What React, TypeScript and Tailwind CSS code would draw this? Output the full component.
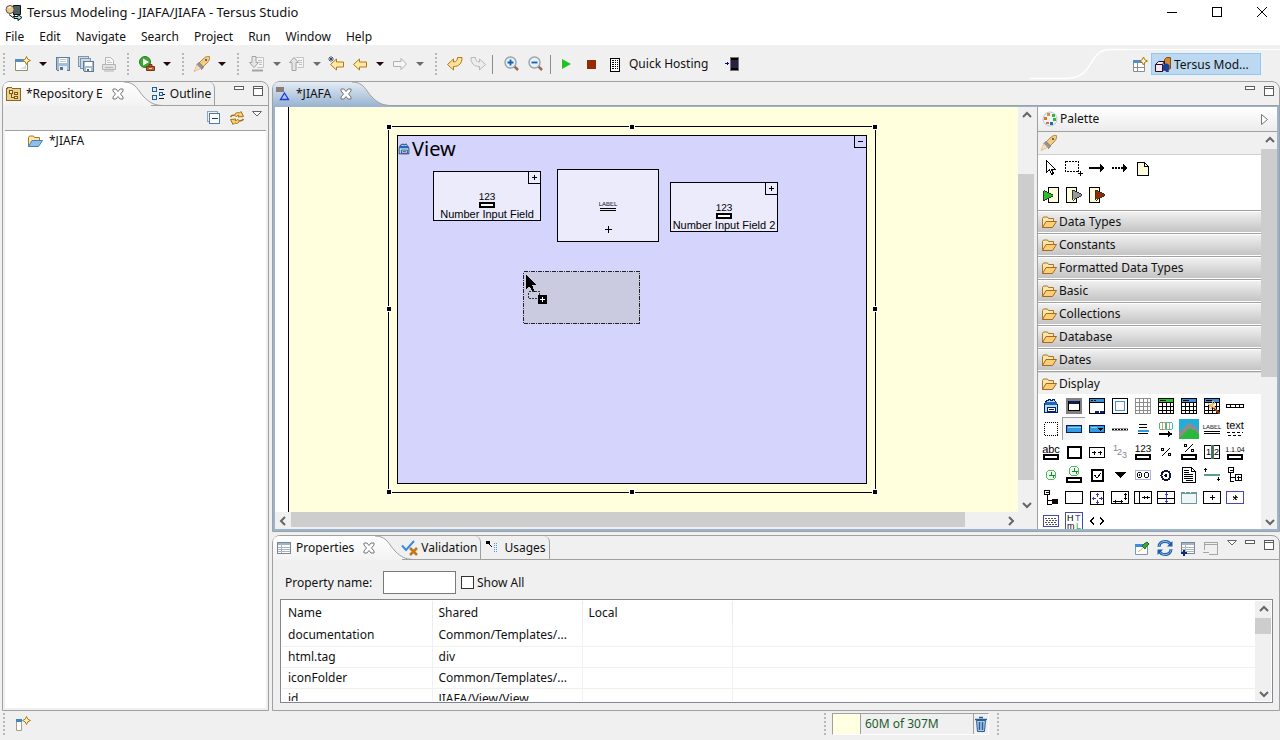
import { useState, type ReactNode } from 'react';
import clsx from 'clsx';

interface IconProps {
  children: ReactNode;
  w?: number;
  h?: number;
  smooth?: boolean;
}

function Icon({ children, w = 16, h = 16, smooth }: IconProps) {
  return (
    <svg
      width={w}
      height={h}
      viewBox={`0 0 ${w} ${h}`}
      fill="none"
      shapeRendering={smooth ? 'auto' : 'crispEdges'}
      className="block shrink-0 overflow-visible"
      aria-hidden="true"
    >
      {children}
    </svg>
  );
}

const tiny = '"Liberation Sans Narrow", "Liberation Sans", sans-serif';

/* ---------- toolbar icons ---------- */

const star = (x: number, y: number) => (
  <path d={`M${x} ${y - 4}l1.3 2.7 2.7 1.3-2.7 1.3-1.3 2.7-1.3-2.7-2.7-1.3 2.7-1.3z`} fill="#fff6c8" stroke="#b07a10" />
);

const AppIcon = () => (
  <Icon w={18} smooth>
    <path d="M8.500 1.500h7v9h-7z" fill="#4d6260" stroke="#111" />
    <circle cx="5" cy="5.500" r="4" fill="#eec98d" stroke="#555" />
    <path d="M3 4c1-1 2-1 3-1" stroke="#fff" />
    <path d="M4 10.500l4 3 2-3" stroke="#111" />
    <path d="M9 12.500h4v-2l4 3-4 3v-2H9z" stroke="#111" fill="#a8e4e8" />
  </Icon>
);

const NewIcon = () => (
  <Icon smooth>
    <path d="M.5 3.5h12v11h-12z" fill="#fff" stroke="#9b8d62" />
    <path d="M0 3h12v3H0z" fill="#4f8fd0" />
    <path d="M2 13c4 0 8-2 9-6v6z" fill="#cfe3f7" />
    {star(11.5, 4.5)}
  </Icon>
);

const SaveIcon = () => (
  <Icon>
    <path d="M1.5 1.5h13v13h-12l-1-1z" fill="#a9bdd0" stroke="#5f7d9a" />
    <path d="M4 2h8v5H4z" fill="#fff" />
    <path d="M5 3.5h6M5 5.5h6" stroke="#c0c7ce" />
    <path d="M4 10h8v5H4z" fill="#e8eef3" />
    <path d="M5 11h3v3H5z" fill="#54718e" />
  </Icon>
);

const SaveAllIcon = () => (
  <Icon>
    <path d="M.5.5h10v10h-10z" fill="#cddae6" stroke="#7d95ad" />
    <path d="M2.5 2.5h10v10h-10z" fill="#cddae6" stroke="#7d95ad" />
    <path d="M5.5 5.5h10v10h-9l-1-1z" fill="#a9bdd0" stroke="#5f7d9a" />
    <path d="M7 6h7v4H7zM8 12h5v3H8z" fill="#fff" />
    <path d="M9 13h2v2H9z" fill="#54718e" />
  </Icon>
);

const PrintIcon = () => (
  <Icon smooth>
    <path d="M4.5 8V1.5h5l3 3V8" fill="#f8f8f8" stroke="#b4b4b4" />
    <path d="M6 4.5h3M6 6.5h5" stroke="#c4c4c4" />
    <path d="M1.5 8.5h13v5h-13z" fill="#e2e2e2" stroke="#b4b4b4" />
    <path d="M4 11.5h8M3 15h10" stroke="#b4b4b4" />
  </Icon>
);

const RunIcon = () => (
  <Icon smooth>
    <circle cx="6" cy="6" r="5.5" fill="#3fa535" stroke="#23821e" />
    <path d="M4 2.5v7L10 6z" fill="#fff" />
    <path d="M7.5 10.5h8v4h-8zM10 10.5v-2h3v2" fill="#b5603a" stroke="#7c3316" />
    <path d="M10 12h3v1h-3z" fill="#f4d48a" />
  </Icon>
);

const RocketIcon = () => (
  <Icon smooth>
    <path d="M9 3c2-2 4-3 6.5-2.5C16 3 15 5 13 7l-4 4-4-4z" fill="#f3cd85" stroke="#b78a3e" />
    <path d="M5 6.5l4.5 4.5-2 2.5L3 8.5z" fill="#989898" stroke="#7a7a7a" />
    <path d="M3 9l-3 6.5 6.5-3z" fill="#fbe1bd" stroke="#e6c090" />
    <circle cx="12" cy="4" r="1" fill="#345" />
  </Icon>
);

const StepIcon = ({ up }: { up?: boolean }) => (
  <Icon smooth>
    <path d="M6.5 1.5h8v10h-6" fill="#f4f4f4" stroke="#c4c4c4" />
    <path d="M9 4.5h4M10 6.5h3M10 8.5h3" stroke="#c0c0c0" />
    {up ? (
      <path d="M5 1.5l4.5 5H7v8H3v-8H.5z" fill="#e6e6e6" stroke="#a4a4a4" />
    ) : (
      <path d="M5 11.5L.5 6.5H3v-6h4v6h2.5z" fill="#e6e6e6" stroke="#a4a4a4" />
    )}
    {!up && <path d="M3 14.5h11" stroke="#a4a4a4" strokeWidth="2" />}
  </Icon>
);

const BackIcon = ({ marked }: { marked?: boolean }) => (
  <Icon smooth>
    <path d="M1.5 8.500l6-5.5v3h7v5h-7v3z" fill="#fde9a9" stroke="#b8780f" />
    {marked && <path d="M2 0v6M-1 3h6M0 1l4 4M4 1L0 5" stroke="#24405e" strokeWidth=".8" />}
  </Icon>
);

const ForwardIcon = () => (
  <Icon smooth>
    <path d="M14.5 8L9 2.5v3H1.5v5H9v3z" fill="#f5f5f5" stroke="#b0b0b0" />
  </Icon>
);

const UndoIcon = () => (
  <Icon smooth>
    <path d="M.5 8.5l6-5.5v3c3 0 4-2 4-4.5h4.5c0 6-3 9-8.500 9V14z" fill="#fde39a" stroke="#b8780f" />
  </Icon>
);

const RedoIcon = () => (
  <Icon smooth>
    <path d="M15.5 8.5L9.500 3v3c-3 0-4-2-4-4.5H1c0 6 3 9 8.500 9V14z" fill="#ededed" stroke="#b8b8b8" />
  </Icon>
);

const ZoomIcon = ({ out }: { out?: boolean }) => (
  <Icon smooth>
    <path d="M10 10l4 4" stroke="#a06a4a" strokeWidth="2.5" />
    <circle cx="6.5" cy="6.5" r="5.5" fill="#e6f1fa" stroke="#9aa4ad" strokeWidth="1.4" />
    <path d={out ? 'M3.5 6.5h6' : 'M3.5 6.5h6M6.5 3.5v6'} stroke="#1d5fae" strokeWidth="1.8" />
  </Icon>
);

const PlayIcon = () => (
  <Icon smooth>
    <path d="M4 3l9 5-9 5z" fill="#1fc41f" />
  </Icon>
);

const StopIcon = () => (
  <Icon>
    <path d="M4 4h9v9H4z" fill="#932b06" />
  </Icon>
);

const HostIcon = () => (
  <Icon w={14}>
    <path d="M2 2h9v13H2z" fill="#fff" stroke="#000" />
    <path d="M4 4.5h6M4 6.5h6M4 8.5h6M4 10.5h6M4 12.5h6" stroke="#000" strokeDasharray="2 1 1 1" />
  </Icon>
);

const ExitIcon = () => (
  <Icon>
    <path d="M6.5 1.5h8v13h-8z" fill="#2c1f40" stroke="#777" />
    <path d="M7 2h7v2H7zM7 12h7v2H7z" fill="#000" />
    <path d="M1 7.5h4M3.5 6v3" stroke="#0a0a68" />
  </Icon>
);

const PerspectiveIcon = () => (
  <Icon smooth>
    <path d="M1.5 3.5h11v11h-11z" fill="#fff" stroke="#8d8d8d" />
    <path d="M1 3h11v3H1z" fill="#4f8fd0" />
    <path d="M5.5 6v8M5.5 10.5h7M1.5 10.5h4" stroke="#8d8d8d" />
    {star(11.5, 4)}
  </Icon>
);

const CubesIcon = () => (
  <Icon smooth>
    <path d="M9.5 2.5l2-2h4v11l-3 2h-3z" fill="#d0892d" stroke="#86500c" />
    <path d="M.5 7.5l3-3h6v7l-2 3h-7zM.5 7.5h7v7M7.5 7.5l2-3" fill="#fbe3f0" stroke="#1b1127" />
    <circle cx="11" cy="10" r="3.5" fill="#1b3f94" />
    <path d="M10 12h3l1 3h-3z" fill="#1b3f94" />
  </Icon>
);

const FolderIcon = ({ blue }: { blue?: boolean }) => (
  <Icon smooth>
    <path d="M1.5 13.5v-9l1-1.500h4l1 1.5h5v3" fill="#fbe7a8" stroke="#a8762a" />
    <path d="M1.5 13.5l3.5-6h10.5l-4 6z" fill={blue ? '#8ec0ec' : '#fbcf74'} stroke={blue ? '#4a7fae' : '#a8662a'} />
  </Icon>
);

const RepoIcon = () => (
  <Icon>
    <path d="M.5 3.5l1-2h4l1 1h8v12H.5z" fill="#eed08a" stroke="#8a6424" />
    <path d="M3.5 4.5h3v3h-3zM8.5 6.5h3v2h-3zM8.5 10.5h3v2h-3zM5 8v3.5h3" stroke="#7b5319" fill="#fff0c0" />
  </Icon>
);

const OutlineIcon = () => (
  <Icon>
    <path d="M1.5 1.5h4v4h-4zM1.5 9.5h4v4h-4zM8.5 6.5h3v3h-3z" fill="#dcecff" stroke="#1f5f9b" />
    <path d="M8 3.5h5M8 12.5h5M12 8h2" stroke="#111" />
  </Icon>
);

const ModelIcon = () => (
  <Icon smooth>
    <path d="M0 1h8v5H0z" fill="#8d7b74" />
    <path d="M8.5 7l4 6.500H4.500z" fill="none" stroke="#1c37e8" strokeWidth="1.3" />
  </Icon>
);

const SheetIcon = ({ plus }: { plus?: boolean }) => (
  <Icon>
    <path d="M1.5 2.5h13v11h-13z" fill="#fff" stroke="#7b8794" />
    <path d="M2 3h12v2H2z" fill="#9fb4c8" />
    <path d="M2 7.5h12M2 9.5h12M2 11.5h12M5.5 3v10" stroke="#aab4be" />
    {plus && <path d="M1 13h6M4 10v6" stroke="#0c2a80" strokeWidth="2" />}
  </Icon>
);

const SyncIcon = ({ blue }: { blue?: boolean }) =>
  blue ? (
    <Icon smooth>
      <path d="M2 7c0-4 3-5.5 6-5.5S13 3 13.5 5M14 9c0 4-3 5.500-6 5.500S3 13 2.500 11" stroke="#1d5ca6" strokeWidth="3" />
      <path d="M2 7c0-4 3-5.5 6-5.5S13 3 13.5 5M14 9c0 4-3 5.500-6 5.500S3 13 2.500 11" stroke="#8cc4f2" />
      <path d="M10 6.5h5.5V1zM6 9.5H.5V15z" fill="#1d5ca6" />
    </Icon>
  ) : (
    <Icon smooth>
      <path d="M5.500 5.500C6 3 8 2 10.500 3l1.500-1.500 2.500 5-5.500.5 1-1.500c-1.500-.5-2 0-2.500 1z" fill="#f8d478" stroke="#a8700f" />
      <path d="M1.500 7c1-1.500 2.500-2 4-1.500" stroke="#a8700f" strokeWidth="1.500" />
      <path d="M10.500 10.500C10 13 8 14 5.500 13L4 14.500l-2.500-5L7 9l-1 1.500c1.500.5 2 0 2.500-1z" fill="#f8d478" stroke="#a8700f" />
      <path d="M14.500 9c-1 1.500-2.500 2-4 1.500" stroke="#a8700f" strokeWidth="1.500" />
    </Icon>
  );

const CollapseIcon = () => (
  <Icon>
    <path d="M1.5 11.5v-10h10v2M1.5 11.5h2" stroke="#86a6c4" />
    <path d="M3.5 3.5h10v10h-10z" fill="#fff" stroke="#4c7ba8" />
    <path d="M6 8.5h6" stroke="#13437b" />
  </Icon>
);

const TriangleIcon = () => (
  <Icon w={10} h={6} smooth>
    <path d="M.5.5h9L5 5z" fill="#fff" stroke="#666" />
  </Icon>
);

const TabCloseIcon = () => (
  <Icon w={12} h={12} smooth>
    <path d="M1 1h3l2 2.500L8 1h3v2L8.500 6 11 9v2H8L6 8.500 4 11H1V9l2.500-3L1 3z" fill="#fff" stroke="#777" />
  </Icon>
);

const ValidationIcon = () => (
  <Icon smooth>
    <path d="M0 5.500l4 4.500 8-9" stroke="#3a8be0" strokeWidth="2" />
    <path d="M8 8l7 7M15 8l-7 7" stroke="#c07818" strokeWidth="2.5" />
  </Icon>
);

const UsagesIcon = () => (
  <Icon>
    <path d="M1 1h4v3H1z" fill="#000" />
    <path d="M4 4l3 3" stroke="#000" />
    <path d="M9.500 3v9M11.500 3v9" stroke="#4b9be8" strokeDasharray="1 1" />
  </Icon>
);

const PinIcon = () => (
  <Icon smooth>
    <path d="M1.5 5.5h12v9h-12z" fill="#fff" stroke="#7f98ae" />
    <path d="M1 4h8v3H1z" fill="#3f8be0" />
    <path d="M4 12l5-4" stroke="#d6b060" />
    <path d="M8 6l3 3 1-2 3-3-2-2-3 2z" fill="#38a832" stroke="#1d6b1a" />
  </Icon>
);

const RemoveIcon = () => (
  <Icon>
    <path d="M1.5 9.500v-7h13v12H6" stroke="#a5a5a5" />
    <path d="M2 4.500h12M0 12.500h6" stroke="#a5a5a5" />
  </Icon>
);

const TrashIcon = () => (
  <Icon w={12} smooth>
    <path d="M1.5 4.5h9l-1 11h-7z" fill="#a9cbe8" stroke="#2b5f96" />
    <path d="M0 3.500h12M4 1.500h4M4.500 6v8M7.500 6v8" stroke="#2b5f96" strokeWidth="1.5" />
  </Icon>
);

const FastViewIcon = () => (
  <Icon smooth>
    <path d="M1.5 3.5h5v11h-5z" fill="#fff" stroke="#a8a08a" />
    <path d="M1 3h6v3H1z" fill="#3f86c4" />
    {star(11.5, 4.5)}
  </Icon>
);

/* ---------- palette icons ---------- */

const inputBox = <path d="M1 11h14v4H1z" fill="#fff" stroke="#000" strokeWidth="2" />;

const grid = (line: string, head?: string) => (
  <>
    <path d="M.5.5h15v15H.5z" fill="#fff" stroke={line} />
    {head && <path d="M1 1h14v3H1z" fill={head} />}
    {head && <path d="M2 2.5h6" stroke="#000" />}
    <path d="M.5 4.5h15M.5 8.5h15M.5 12.5h15M4.5 4v12M8.5 4v12M12.5 4v12" stroke={line} />
    {!head && <path d="M4.5 0v4M8.5 0v4M12.5 0v4" stroke={line} />}
  </>
);

const clock = (y: number) => (
  <>
    <circle cx="8" cy={y} r="5" fill="#eefaee" stroke="#57b567" />
    <path d={`M8.5 ${y - 3}v4M6 ${y + 0.5}h6M10.5 ${y}v3`} stroke="#178a2c" />
  </>
);

const percent = (y: number) => (
  <>
    <path d={`M4 ${y + 4}l8-8`} stroke="#000" />
    <path d={`M3.5 ${y - 3.5}h2v2h-2zM10.5 ${y + 1.5}h2v2h-2z`} stroke="#000" />
  </>
);

const label = (text: string, y: number, size: number) => (
  <text x="8" y={y} fontSize={size} textAnchor="middle" fill="#000" fontFamily={tiny} textRendering="geometricPrecision">
    {text}
  </text>
);

const glyph = (text: string, x: number, y: number, size: number, fill: string) => (
  <text x={x} y={y} fontSize={size} fill={fill} fontFamily={tiny}>
    {text}
  </text>
);

const numberField = (
  <>
    {label('123', 8, 10)}
    {inputBox}
  </>
);

const labelMark = (
  <>
    {label('LABEL', 8, 6)}
    <path d="M0 10.5h16M0 12.5h16" stroke="#000" />
  </>
);

const viewMark = (
  <>
    <path d="M1.5 6.5l2-4h2v-1h2v1h2v-1h2v1l3 4v8h-13z" fill="#a8e6f4" stroke="#0c1f66" />
    <path d="M2 4h12v3H2z" fill="#2a5fc0" />
    <path d="M4.5 9.5h8v4h-8z" fill="#fff" stroke="#0c1f66" />
    <path d="M6 11.5h5" stroke="#0c1f66" />
  </>
);

const displayItems: [string, ReactNode][] = [
  ['View', viewMark],
  ['Popup', <><path d="M0 0h16v16H0z" fill="#808080" /><path d="M2.5 3.5h11v9h-11z" fill="#fff" stroke="#000" /><path d="M3 3h10v3H3z" fill="#0b1c58" /></>],
  ['Window', <><path d="M.5.5h15v15H.5z" fill="#fff" stroke="#000" /><path d="M1 1h14v3H1z" fill="#3593e0" /><path d="M2 2.5h6" stroke="#000" strokeDasharray="2 1" /><path d="M.5 4.5h15" stroke="#000" /><path d="M6 14h4M11 14h4" stroke="#0b1c88" strokeWidth="2" /></>],
  ['Frame', <><path d="M.5.5h15v15H.5z" fill="#fff" stroke="#000" /><path d="M3.5 3.5h9v9h-9z" stroke="#4a90e0" /></>],
  ['Grid', grid('#8c8c8c')],
  ['Table', grid('#000', '#2cc42c')],
  ['Data Table', grid('#000', '#3a8fe0')],
  ['Table Wizard', <>{grid('#000', '#3a8fe0')}<path d="M8 8l8 8" stroke="#8a4516" strokeWidth="2" /><path d="M4 6l8 4M9 3l-2 8M5 9l6-4" stroke="#f0b868" strokeWidth="1.5" /></>],
  ['Row', <path d="M-.5 6.5h17v3h-17zM3.5 6v4M8.5 6v4M12.5 6v4" fill="#fff" stroke="#000" />],
  ['Container', <path d="M1.5 1.5h13v13h-13z" stroke="#000" strokeDasharray="1 1" />],
  ['Button', <><path d="M.5 4.5h15v7H.5z" fill="#3399e0" stroke="#0b1c58" /><path d="M2 6.5h13" stroke="#8fd0f8" /></>],
  ['Menu Button', <><path d="M.5 4.5h15v7H.5z" fill="#3399e0" stroke="#0b1c58" /><path d="M2 6.5h6" stroke="#8fd0f8" /><path d="M9 7h5l-2.5 3z" fill="#000" /></>],
  ['Separator', <><path d="M0 7.5h16M0 9.5h16" stroke="#999" /><path d="M0 8.5h16" stroke="#000" strokeDasharray="2 1" /></>],
  ['List', <><path d="M4 3.5h8M4 6.5h8M3 12.5h10" stroke="#000" /><path d="M3 9.5h11" stroke="#2a9ad8" strokeWidth="2" /></>],
  ['Link', <><circle cx="5" cy="5" r="4" stroke="#57b567" /><circle cx="8" cy="5" r="4" stroke="#d8a050" /><circle cx="11" cy="5" r="4" stroke="#4ab0d0" /><path d="M1 12.5h9" stroke="#000" strokeWidth="2" /><path d="M10 10l5 3-5 3z" fill="#000" /></>],
  ['Image', <><path d="M-2-2h20v20H-2z" fill="#22acd8" /><path d="M-2 12L4 5l5-3 6 4 3 5v7H-2z" fill="#8c8c8c" /><path d="M-2 18l5-6 5-4 5 1 5 5v4z" fill="#29b93c" /></>],
  ['Label', labelMark],
  ['Text', <>{label('text', 8, 11)}<path d="M0 11.5h16M1 14.5h14" stroke="#000" strokeDasharray="3 2" /></>],
  ['Text Input', <>{label('abc', 9, 11)}{inputBox}</>],
  ['Text Area', <path d="M2 3h13v11H2z" fill="#fff" stroke="#000" strokeWidth="2" />],
  ['Password', <><path d="M.5 3.5h15v10H.5z" fill="#fff" stroke="#000" /><path d="M3 8.5h4M5 6.5v4M9 8.5h4M11 6.5v4" stroke="#000" /></>],
  ['Number', <>{glyph('1', 1, 7, 9, '#888')}{glyph('2', 5, 11, 9, '#888')}{glyph('3', 10, 14, 9, '#888')}</>],
  ['Number Input', numberField],
  ['Percent', percent(8)],
  ['Percent Input', <>{percent(4)}{inputBox}</>],
  ['Date', <><path d="M.5 1.5h15v13H.5z" fill="#fff" stroke="#000" /><path d="M7 1h3v14H7z" fill="#4c7260" />{glyph('1', 2, 11, 9, '#000')}{glyph('2', 10, 11, 9, '#000')}</>],
  ['Date Input', <>{label('1.1.04', 8, 7)}{inputBox}</>],
  ['Time', clock(8)],
  ['Time Input', <>{clock(4)}{inputBox}</>],
  ['Check Box', <><path d="M3 3h11v11H3z" fill="#fff" stroke="#000" strokeWidth="2" /><path d="M5.5 8l2.5 3 4-5" stroke="#000" /></>],
  ['Chooser', <path d="M2 5h12l-6 6z" fill="#000" />],
  ['Radio Group', <><path d="M.5 3.5h15v9H.5z" fill="#fff" stroke="#b0aee0" /><circle cx="4.5" cy="8" r="2.5" stroke="#111" /><circle cx="4.5" cy="8" r="1" fill="#111" /><circle cx="11.5" cy="8" r="2.5" stroke="#111" /></>],
  ['Radio Button', <><circle cx="8" cy="8.5" r="4.5" fill="#fff" stroke="#0b1440" strokeWidth="2" /><circle cx="8" cy="8.5" r="1.5" fill="#000" /></>],
  ['Document', <><path d="M1.5.5h9l4 4v11h-13z" fill="#fff" stroke="#000" /><path d="M10.5.5v4h4M3 3.5h5M3 5.5h5M3 7.5h9M3 9.5h9M3 11.5h9M5 13.5h7" stroke="#000" /></>],
  ['Slider', <><path d="M0 8h16" stroke="#5d9c8c" strokeWidth="2" /><path d="M1.5 1v4M0 2.5h3M14.5 10v4M13 12.5h3" stroke="#000" /></>],
  ['Tree', <path d="M1.5.5h5v5h-5zM8.5 7.5h6v6h-6zM3.5 6v8h3M3 3.5h3M10 10.5h4M11.5 9v4M3.5 10.5h4" stroke="#000" />],
  ['Tree Node', <><path d="M1.5.5h5v4h-5zM3 2.5h3M4.5 5v9.5h4M4.5 10.5h4" stroke="#000" /><path d="M9 9h6v5H9z" fill="#110505" /></>],
  ['Pane', <path d="M-.5 1.5h17v12h-17z" fill="#fff" stroke="#000" />],
  ['Scroll Pane', <><path d="M1.5 1.5h13v13h-13z" fill="#fff" stroke="#000" /><path d="M8.5 3v4M8.5 10v4M3 8.5h4M10 8.5h4M7 4.5h3M7 12.5h3M4.5 7v3M12.5 7v3" stroke="#3b3bb8" /></>],
  ['Resizer', <><path d="M-.5 1.5h17v12h-17z" fill="#fff" stroke="#000" /><path d="M1 11.5h10M3.5 10v3M9.5 10v3M13.5 3v7M12 4.5h3M12 8.5h3" stroke="#000" /></>],
  ['Vertical Split', <path d="M-.5 1.5h17v12h-17zM4.5 1v13M7 7.5h8M9.5 6v3M12.5 6v3" fill="#fff" stroke="#000" />],
  ['Horizontal Split', <><path d="M-.5 1.5h17v12h-17zM0 8.5h16" fill="#fff" stroke="#000" /><path d="M8.5 2v11M7 4.5h3M7 11.5h3" stroke="#3b3bb8" /></>],
  ['Tab Pane', <><path d="M.5 2.5h15v11H.5z" fill="#eef6f8" stroke="#6d97a0" /><path d="M1 3h14v1H1z" fill="#6d97a0" /><path d="M4 2h1M9 2h1" stroke="#fff" /></>],
  ['Accordion', <path d="M-.5 1.5h17v12h-17zM6 7.5h5M8.500 5v5" fill="#fff" stroke="#000" />],
  ['Custom', <><path d="M-.5 1.5h17v12h-17z" fill="#fff" stroke="#4646b4" /><path d="M5.5 7.5h5M8 5v5M6 6l4 4M10 6l-4 4" stroke="#000" strokeWidth=".8" /></>],
  ['Keyboard', <><path d="M.5 2.5h15v11H.5z" fill="#fff" stroke="#4646b4" /><path d="M2 5.500h12M3 7.5h11M2 9.5h12M3 11.500h11" stroke="#555" strokeDasharray="2 1" /></>],
  ['HTML', <><path d="M-.5-.5h17v18h-17z" fill="#fff" stroke="#4646b4" />{glyph('H', 1, 8, 9, '#000')}{glyph('T', 9, 8, 9, '#4646b4')}{glyph('m', 1, 16, 9, '#200')}{glyph('L', 10, 16, 9, '#2cb82c')}</>],
  ['Tag', <path d="M5 4.5L1.5 8 5 11.5M11 4.5L14.5 8 11 11.5" stroke="#000" />],
];

const toolItems: [string, ReactNode][] = [
  ['Select', <path d="M3.5.5v12l3-3 2 5 2-1-2-4h4z" fill="#fff" stroke="#000" />],
  ['Marquee', <><path d="M-.5 1.5h13v10h-13z" stroke="#000" strokeDasharray="2 1" /><path d="M12 13.5h5M14.5 11v5" stroke="#000" /></>],
  ['Flow', <><path d="M0 8h11" stroke="#000" strokeWidth="2" /><path d="M11 4l5 4-5 4z" fill="#000" /></>],
  ['Removal Flow', <><path d="M0 8h11" stroke="#000" strokeWidth="2" strokeDasharray="2 1" /><path d="M11 4l5 4-5 4z" fill="#000" /></>],
  ['Note', <path d="M2.5 2.5h7l4 4v9h-11zM9.5 2.5v4h4" fill="#fffddc" stroke="#000" />],
];

const slot = (color: string, side: 'left' | 'right') => (
  <>
    <path d={side === 'left' ? 'M5.5.5h10v15h-10z' : 'M.5.5h10v15H.5z'} fill="#fffddc" stroke="#000" />
    <path d={side === 'left' ? 'M.5 3.5v10l9.5-5z' : 'M6.5 3v10L16 8z'} fill={color} stroke="#000" strokeWidth=".8" />
  </>
);

const slotItems: [string, ReactNode][] = [
  ['Trigger', slot('#25c025', 'left')],
  ['Exit', slot('#999', 'right')],
  ['Error Exit', slot('#932b06', 'right')],
];

const drawers = ['Data Types', 'Constants', 'Formatted Data Types', 'Basic', 'Collections', 'Database', 'Dates'];

const properties = [
  { name: 'documentation', shared: 'Common/Templates/...' },
  { name: 'html.tag', shared: 'div' },
  { name: 'iconFolder', shared: 'Common/Templates/...' },
  { name: 'id', shared: 'JIAFA/View/View' },
];

const menus = ['File', 'Edit', 'Navigate', 'Search', 'Project', 'Run', 'Window', 'Help'];

/* ---------- small building blocks ---------- */

function ToolButton({ title, children }: { title: string; children: ReactNode }) {
  return (
    <button title={title} className="flex h-6 w-[23px] shrink-0 items-center justify-center hover:bg-[#d8e6f2]">
      {children}
    </button>
  );
}

function DropButton({ disabled }: { disabled?: boolean }) {
  return (
    <button title="More" className="flex h-6 w-[17px] shrink-0 items-center justify-center">
      <Icon w={8} h={4} smooth>
        <path d="M0 0h8L4 4z" fill={disabled ? '#6c6c6c' : '#220808'} />
      </Icon>
    </button>
  );
}

function Grip({ className }: { className?: string }) {
  return (
    <span className={clsx('w-2 shrink-0', className)}>
      <Icon w={4} h={22}>
        <path d="M1 0v22" stroke="#b9b9b9" strokeWidth="2" strokeDasharray="2 2" />
      </Icon>
    </span>
  );
}

const Divider = () => <span className="mx-[3px] h-[19px] w-px shrink-0 bg-[#8c8c8c]" />;

function Chevron({ dir }: { dir: 'up' | 'down' | 'left' | 'right' }) {
  const paths = { up: 'M1 6l4-4 4 4', down: 'M1 3l4 4 4-4', left: 'M6 1L2 5l4 4', right: 'M3 1l4 4-4 4' };
  return (
    <button title={dir} className="flex size-4 shrink-0 items-center justify-center">
      <Icon w={9} h={9} smooth>
        <path d={paths[dir]} stroke="#666" strokeWidth="2" />
      </Icon>
    </button>
  );
}

function PanelButtons({ menu }: { menu?: boolean }) {
  return (
    <div className="flex gap-2 pt-1 pr-1">
      {menu && (
        <button title="View Menu" className="self-start">
          <TriangleIcon />
        </button>
      )}
      <button title="Minimize" className="self-start">
        <Icon w={11} h={5}>
          <path d="M.5.5h9v3H.5z" fill="#fff" stroke="#5c5c5c" />
        </Icon>
      </button>
      <button title="Maximize" className="self-start">
        <Icon w={11} h={11}>
          <path d="M.5.5h9v9H.5zM.5 2.5h9" fill="#fff" stroke="#5c5c5c" />
        </Icon>
      </button>
    </div>
  );
}

function ActiveTab({ icon, title, blue }: { icon: ReactNode; title: string; blue?: boolean }) {
  return (
    <>
      <button
        role="tab"
        aria-selected="true"
        className={clsx(
          'flex h-6 shrink-0 items-center gap-1 rounded-tl-md bg-linear-to-b pl-[3px]',
          blue ? 'from-[#e4ecf5] to-[#99b4d1]' : 'from-white to-[#f3f3f3]'
        )}
      >
        {icon}
        <span className="pr-[5px]">{title}</span>
        <TabCloseIcon />
      </button>
      <svg width="38" height="24" viewBox="0 0 38 24" className="block shrink-0" aria-hidden="true">
        <defs>
          <linearGradient id="tab-blue" x1="0" y1="0" x2="0" y2="1">
            <stop offset="0" stopColor="#e4ecf5" />
            <stop offset="1" stopColor="#99b4d1" />
          </linearGradient>
          <linearGradient id="tab-plain" x1="0" y1="0" x2="0" y2="1">
            <stop offset="0" stopColor="#fff" />
            <stop offset="1" stopColor="#f3f3f3" />
          </linearGradient>
        </defs>
        <path d="M0 0c12 0 14 9 20 15s10 8 18 8v1H0z" fill={blue ? 'url(#tab-blue)' : 'url(#tab-plain)'} />
        <path d="M0 0c12 0 14 9 20 15s10 8 18 8.5" fill="none" stroke="#a0a0a0" />
      </svg>
    </>
  );
}

function IdleTab({ icon, title, first }: { icon: ReactNode; title: string; first?: boolean }) {
  return (
    <button
      role="tab"
      className={clsx(
        'flex h-6 shrink-0 items-center gap-[3px] rounded-tr-md border-r border-b border-[#a0a0a0] pr-[3px]',
        first ? '-ml-[11px]' : 'pl-1'
      )}
    >
      {icon}
      <span>{title}</span>
    </button>
  );
}

function VScroll({ before, thumb, after }: { before: string; thumb: string; after: string }) {
  return (
    <div className="flex w-4 shrink-0 flex-col bg-[#f0f0f0]">
      <Chevron dir="up" />
      <div className={before} />
      <div className={clsx('bg-[#cdcdcd]', thumb)} />
      <div className={after} />
      <Chevron dir="down" />
    </div>
  );
}

/* ---------- diagram ---------- */

function Toggle({ minus }: { minus?: boolean }) {
  return (
    <button title={minus ? 'Collapse' : 'Expand'} className="absolute -top-px -right-px border border-black">
      <Icon w={11} h={11}>
        <path d={minus ? 'M3 5.5h5' : 'M3 5.5h5M5.5 3v5'} stroke="#000" />
      </Icon>
    </button>
  );
}

function FieldNode({ title, className }: { title: string; className: string }) {
  return (
    <div className={clsx('absolute flex h-[50px] w-[108px] flex-col items-center justify-end border border-black bg-[#ebebfc]', className)}>
      <Toggle />
      <Icon>{numberField}</Icon>
      <span className="whitespace-nowrap text-[11px] leading-3">{title}</span>
    </div>
  );
}

const handles = [
  'left-[97px] top-[17px]',
  'left-[340px] top-[17px]',
  'left-[583px] top-[17px]',
  'left-[97px] top-[199px]',
  'left-[583px] top-[199px]',
  'left-[97px] top-[382px]',
  'left-[340px] top-[382px]',
  'left-[583px] top-[382px]',
];

function Diagram() {
  return (
    <div className="relative min-w-0 flex-1 overflow-hidden border-l border-black bg-[#ffffdd] font-['Liberation_Sans',sans-serif] text-black">
      <div className="absolute left-[99px] top-[19px] h-[367px] w-[488px] border border-black" />
      <div className="absolute left-[108px] top-[28px] h-[349px] w-[470px] border border-black bg-[#d4d4fc]">
        <div className="flex items-center gap-[2px]">
          <svg width="12" height="12" viewBox="0 0 16 16" className="block" aria-hidden="true">
            {viewMark}
          </svg>
          <span className="font-['Noto_Sans',sans-serif] text-[20px] leading-[26px]">View</span>
        </div>
        <Toggle minus />
      </div>
      {handles.map((pos) => (
        <span key={pos} className={clsx('absolute size-[6px] border border-white bg-black', pos)} />
      ))}
      <FieldNode title="Number Input Field" className="left-[144px] top-[64px]" />
      <div className="absolute left-[268px] top-[62px] flex h-[73px] w-[102px] flex-col items-center justify-end gap-3 border border-black bg-[#ebebfc] pb-2">
        <Icon>{labelMark}</Icon>
        <Icon w={7} h={7}>
          <path d="M0 3.5h7M3.5 0v7" stroke="#000" />
        </Icon>
      </div>
      <FieldNode title="Number Input Field 2" className="left-[381px] top-[75px]" />
      <svg width="117" height="53" className="absolute left-[234px] top-[164px]" shapeRendering="crispEdges" aria-hidden="true">
        <path d="M.5.5h116v52H.5z" fill="#cacae0" stroke="#222" strokeDasharray="4 1 1 1" />
        <path d="M3 3v15l3-3 4 6h2l-3-7h4z" fill="#000" />
        <path d="M5.5 20.5h11v7h-11z" stroke="#333" fill="none" strokeDasharray="2 1" />
        <path d="M15 24h9v9h-9z" fill="#000" />
        <path d="M17 28.5h5M19.5 26v5" stroke="#fff" />
      </svg>
    </div>
  );
}

/* ---------- panels ---------- */

function RepositoryPanel() {
  return (
    <section className="ml-[2px] flex w-[267px] shrink-0 flex-col rounded-t-lg border border-[#a0a0a0] pb-[2px]">
      <div role="tablist" className="flex h-6">
        <ActiveTab icon={<RepoIcon />} title="*Repository E" />
        <IdleTab icon={<OutlineIcon />} title="Outline" first />
        <div className="flex flex-1 justify-end border-b border-[#a0a0a0]">
          <PanelButtons />
        </div>
      </div>
      <div className="mx-[2px] flex h-[25px] items-center justify-end border-b border-[#a0a0a0] pr-1">
        <ToolButton title="Collapse All"><CollapseIcon /></ToolButton>
        <ToolButton title="Link with Editor"><SyncIcon /></ToolButton>
        <button title="View Menu" className="mb-2 ml-1">
          <TriangleIcon />
        </button>
      </div>
      <div className="mx-[2px] flex-1 bg-white">
        <a href="#jiafa" className="flex h-5 items-center gap-[6px] pl-[22px]">
          <FolderIcon blue />
          *JIAFA
        </a>
      </div>
    </section>
  );
}

function Palette() {
  return (
    <aside className="ml-[3px] flex w-[240px] shrink-0 flex-col overflow-hidden border-l border-[#a0a0a0] bg-white">
      <div className="flex h-[25px] shrink-0 items-center gap-[2px] border-b border-[#a0a0a0] bg-linear-to-b from-white to-[#ececec] pl-1 pr-[9px]">
        <Icon smooth>
          <circle cx="8" cy="8" r="7" fill="#eef3f8" stroke="#b8c8d8" />
          <path d="M5 2h3v3H5z" fill="#d99048" />
          <path d="M10 3h3v3h-3zM11 7h3v3h-3z" fill="#3cb43c" />
          <path d="M2 6h3v3H2zM4 11h3v2H4z" fill="#e07030" />
          <path d="M8 11h3v3H8z" fill="#2468b8" />
        </Icon>
        <span className="flex-1">Palette</span>
        <button title="Hide Palette">
          <Icon w={7} h={11} smooth>
            <path d="M.5.5v10l6-5z" fill="#fff" stroke="#777" />
          </Icon>
        </button>
      </div>
      <div className="flex min-h-0 flex-1">
        <div className="min-w-0 flex-1 overflow-hidden">
          <div className="flex h-[23px] items-center border-b border-[#d0d0d0] bg-[#f0f0f0] pl-[3px]">
            <RocketIcon />
          </div>
          <div className="flex h-[55px] flex-col justify-between pb-[3px] pl-px pt-px">
            <div className="flex">
              {toolItems.map(([title, art]) => (
                <ToolButton key={title} title={title}><Icon>{art}</Icon></ToolButton>
              ))}
            </div>
            <div className="flex">
              {slotItems.map(([title, art]) => (
                <ToolButton key={title} title={title}><Icon>{art}</Icon></ToolButton>
              ))}
            </div>
          </div>
          {drawers.map((name) => (
            <div key={name} className="border-t border-[#a0a0a0]">
              <button className="flex h-[22px] w-full items-center gap-[2px] border-y border-white bg-linear-to-b from-[#f0f0f0] to-[#c4c4c4] pl-[3px]">
                <FolderIcon />
                {name}
              </button>
            </div>
          ))}
          <div className="border-t border-[#a0a0a0]">
            <button className="flex h-[22px] w-full items-center gap-[2px] border-t border-[#dcdcdc] bg-[#f1f1f1] pl-[3px]">
              <FolderIcon />
              Display
            </button>
          </div>
          <div className="grid grid-cols-[repeat(9,23px)] pl-px">
            {displayItems.map(([title, art]) => (
              <button
                key={title}
                title={title}
                className={clsx(
                  'flex h-[23px] items-center justify-center',
                  title === 'Button' && 'border-l border-t border-[#a0a0a0] bg-[#f5f5f5]'
                )}
              >
                <Icon>{art}</Icon>
              </button>
            ))}
          </div>
        </div>
        <VScroll before="h-px" thumb="h-[228px]" after="flex-1" />
      </div>
    </aside>
  );
}

function EditorPanel() {
  return (
    <section className="flex min-h-0 flex-1 flex-col rounded-t-lg border border-[#a0a0a0]">
      <div role="tablist" className="flex h-6 shrink-0">
        <ActiveTab icon={<ModelIcon />} title="*JIAFA" blue />
        <div className="flex flex-1 justify-end border-b border-[#a0a0a0]">
          <PanelButtons />
        </div>
      </div>
      <div className="flex min-h-0 flex-1 border-2 border-t-1 border-[#99b4d1]">
        <div className="flex min-w-0 flex-1 flex-col">
          <div className="flex min-h-0 flex-1">
            <div className="w-[13px] shrink-0 bg-white" />
            <Diagram />
            <VScroll before="h-[51px]" thumb="flex-1" after="h-4" />
          </div>
          <div className="flex h-[17px] bg-[#f0f0f0]">
            <Chevron dir="left" />
            <div className="h-[15px] flex-1 bg-[#cdcdcd]" />
            <div className="w-[37px]" />
            <Chevron dir="right" />
            <div className="w-4" />
          </div>
        </div>
        <Palette />
      </div>
    </section>
  );
}

function PropertiesPanel() {
  const [filter, setFilter] = useState('');
  const [showAll, setShowAll] = useState(false);
  const rows = properties.filter((p) => p.name.includes(filter));

  return (
    <section className="flex h-[176px] shrink-0 flex-col rounded-t-lg border border-[#a0a0a0] pb-[7px]">
      <div role="tablist" className="flex h-[23px] shrink-0">
        <ActiveTab icon={<SheetIcon />} title="Properties" />
        <IdleTab icon={<ValidationIcon />} title="Validation" first />
        <IdleTab icon={<UsagesIcon />} title="Usages" />
        <div className="flex h-6 flex-1 justify-end border-b border-[#a0a0a0]">
          <ToolButton title="Pin"><PinIcon /></ToolButton>
          <ToolButton title="Refresh"><SyncIcon blue /></ToolButton>
          <ToolButton title="Add Property"><SheetIcon plus /></ToolButton>
          <ToolButton title="Remove Property"><RemoveIcon /></ToolButton>
          <span className="w-[5px]" />
          <PanelButtons menu />
        </div>
      </div>
      <div className="flex h-10 shrink-0 items-end pb-[5px] pl-3">
        <label htmlFor="property-name" className="w-[98px] leading-[23px]">Property name:</label>
        <input
          id="property-name"
          value={filter}
          onChange={(e) => setFilter(e.target.value)}
          className="h-[23px] w-[73px] border border-[#7a7a7a] bg-white px-1 outline-none"
        />
        <label className="flex h-[23px] items-center gap-[3px] pl-[5px]">
          <input
            type="checkbox"
            checked={showAll}
            onChange={(e) => setShowAll(e.target.checked)}
            className="size-[13px] appearance-none border border-[#333] bg-white checked:bg-[#333]"
          />
          Show All
        </label>
      </div>
      <div className="ml-[7px] mr-[6px] flex min-h-0 flex-1 border border-[#828790] bg-white p-px">
        <div className="min-w-0 flex-1 overflow-hidden">
          <table className="w-full table-fixed border-collapse text-left">
            <colgroup>
              <col className="w-[150px]" />
              <col className="w-[150px]" />
              <col className="w-[150px]" />
              <col />
            </colgroup>
            <thead>
              <tr className="h-6">
                <th className="border-r border-[#ebebeb] pl-[6px] font-normal">Name</th>
                <th className="border-r border-[#ebebeb] pl-[6px] font-normal">Shared</th>
                <th className="border-r border-[#ebebeb] pl-[6px] font-normal">Local</th>
                <th />
              </tr>
            </thead>
            <tbody>
              {rows.map((row) => (
                <tr key={row.name} className="h-[21px] border-b border-[#f0f0f0]">
                  <td className="border-r border-[#f0f0f0] pl-[6px]">{row.name}</td>
                  <td className="border-r border-[#f0f0f0] pl-[6px] whitespace-nowrap">{row.shared}</td>
                  <td className="border-r border-[#f0f0f0]" />
                  <td />
                </tr>
              ))}
            </tbody>
          </table>
        </div>
        <VScroll before="h-px" thumb="h-4" after="flex-1" />
      </div>
    </section>
  );
}

function Toolbar() {
  return (
    <div className="flex h-9 shrink-0 justify-between bg-[#f0f0f0]">
      <div className="flex items-center pl-[3px] pt-[2px]">
        <Grip />
        <ToolButton title="New"><NewIcon /></ToolButton>
        <DropButton />
        <ToolButton title="Save"><SaveIcon /></ToolButton>
        <ToolButton title="Save All"><SaveAllIcon /></ToolButton>
        <ToolButton title="Print"><PrintIcon /></ToolButton>
        <Grip className="ml-[7px]" />
        <ToolButton title="Run"><RunIcon /></ToolButton>
        <DropButton />
        <Grip className="ml-[7px]" />
        <ToolButton title="Launch"><RocketIcon /></ToolButton>
        <DropButton />
        <Grip className="ml-[7px]" />
        <ToolButton title="Next Annotation"><StepIcon /></ToolButton>
        <DropButton disabled />
        <ToolButton title="Previous Annotation"><StepIcon up /></ToolButton>
        <DropButton disabled />
        <ToolButton title="Last Edit Location"><BackIcon marked /></ToolButton>
        <ToolButton title="Back"><BackIcon /></ToolButton>
        <DropButton />
        <ToolButton title="Forward"><ForwardIcon /></ToolButton>
        <DropButton disabled />
        <Grip className="ml-[7px]" />
        <ToolButton title="Undo"><UndoIcon /></ToolButton>
        <ToolButton title="Redo"><RedoIcon /></ToolButton>
        <Divider />
        <div className="flex gap-px pl-1">
          <ToolButton title="Zoom In"><ZoomIcon /></ToolButton>
          <ToolButton title="Zoom Out"><ZoomIcon out /></ToolButton>
        </div>
        <Divider />
        <div className="flex items-center gap-[2px]">
          <ToolButton title="Start Server"><PlayIcon /></ToolButton>
          <ToolButton title="Stop Server"><StopIcon /></ToolButton>
          <button className="flex h-6 items-center gap-[7px] whitespace-nowrap pl-1">
            <HostIcon />
            Quick Hosting
          </button>
        </div>
        <span className="w-3" />
        <ToolButton title="Exit"><ExitIcon /></ToolButton>
      </div>
      <div className="flex">
        <svg width="98" height="36" viewBox="0 0 98 36" fill="none" className="block" aria-hidden="true">
          <path d="M0 33.5h35c18 0 22-9 27-17s9-12 19-12h17" stroke="#fff" strokeWidth="1.5" />
        </svg>
        <div className="mt-1 flex items-start border-t border-white pr-[19px] pt-[3px]">
          <ToolButton title="Open Perspective"><PerspectiveIcon /></ToolButton>
          <button className="flex h-[22px] w-[110px] items-center gap-[3px] border border-[#90c8f6] bg-[#bcd9f1] pl-[3px] pt-[2px]">
            <CubesIcon />
            Tersus Mod...
          </button>
        </div>
      </div>
    </div>
  );
}

function StatusBar() {
  return (
    <footer className="flex h-[29px] shrink-0 items-center bg-[#f0f0f0] pb-[3px] pl-[3px]">
      <Grip />
      <ToolButton title="Fast View"><FastViewIcon /></ToolButton>
      <div className="flex-1" />
      <Grip />
      <div className="flex h-[22px] w-[157px] border border-[#a0a0a0] border-r-white border-b-white">
        <div className="w-[28px] border-r border-[#a0a0a0] bg-[#ffffe1]" />
        <span className="flex-1 pl-1 leading-5 text-[#1c5c2c]">60M of 307M</span>
        <button title="Run Garbage Collector" className="border-l border-[#a0a0a0] px-px">
          <TrashIcon />
        </button>
      </div>
      <Grip className="ml-2 mr-[275px]" />
    </footer>
  );
}

export default function App() {
  return (
    <div className="flex h-screen min-h-[600px] flex-col overflow-hidden bg-[#f0f0f0] font-['Noto_Sans','Noto_Sans_CJK_SC',sans-serif] text-[12px] leading-4 text-[#111]">
      <header className="shrink-0 bg-white">
        <div className="flex h-6 items-center gap-1 pl-[5px] pr-[13px]">
          <AppIcon />
          <h1 className="flex-1 text-[13px]">Tersus Modeling - JIAFA/JIAFA - Tersus Studio</h1>
          <div className="flex items-center gap-[35px]">
            <button title="Minimize window">
              <Icon w={10} h={10}><path d="M0 5.5h10" stroke="#000" /></Icon>
            </button>
            <button title="Maximize window">
              <Icon w={10} h={10}><path d="M.5.5h9v9h-9z" stroke="#000" /></Icon>
            </button>
            <button title="Close window">
              <Icon w={10} h={10} smooth><path d="M0 0l10 10M10 0L0 10" stroke="#000" /></Icon>
            </button>
          </div>
        </div>
        <nav className="flex h-[21px] items-center gap-[15px] pl-[5px] pt-1">
          {menus.map((item) => (
            <button key={item}>{item}</button>
          ))}
        </nav>
      </header>
      <Toolbar />
      <main className="flex min-h-0 flex-1 gap-[3px]">
        <RepositoryPanel />
        <div className="flex min-w-0 flex-1 flex-col gap-[3px]">
          <EditorPanel />
          <PropertiesPanel />
        </div>
      </main>
      <StatusBar />
    </div>
  );
}
